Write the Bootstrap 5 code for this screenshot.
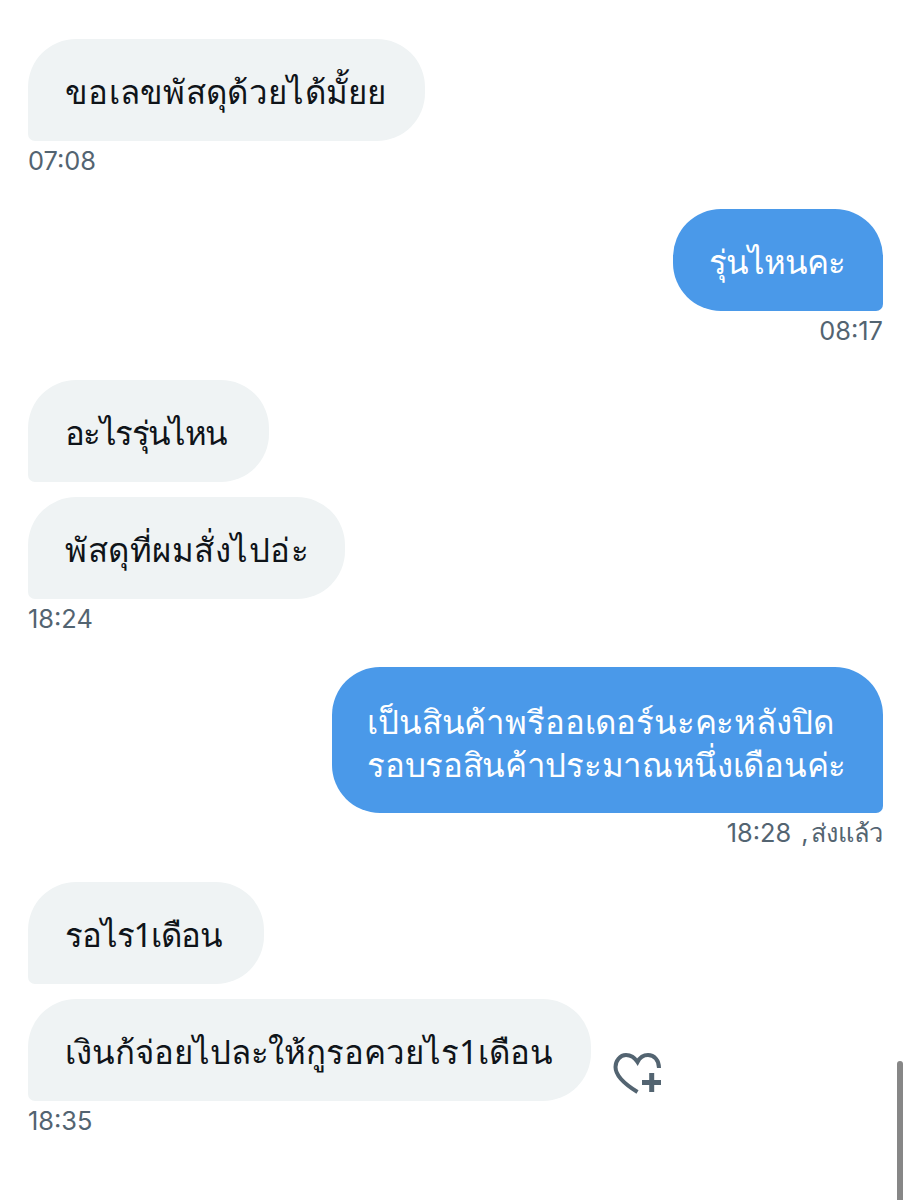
<!DOCTYPE html>
<html lang="th">
<head>
  <meta charset="UTF-8" />
  <title>Messages</title>
  <link href="https://cdn.jsdelivr.net/npm/bootstrap@5.3.3/dist/css/bootstrap.min.css" rel="stylesheet" />
  <style>
    html, body { height: 1200px; overflow: hidden; }
    body { background: #fff; font-family: "Noto Sans", "DejaVu Sans", sans-serif; position: relative; }
    .thread { padding: 39px 27px 0 28px; }
    .bubble { font-size: 33px; line-height: 44px; padding: 31px 38px 27px 37px; border-radius: 48px; width: fit-content; white-space: nowrap; }
    .bubble-in { background: #eff3f4; color: #0f1419; border-bottom-left-radius: 7px; }
    .bubble-out { background: #4a99e9; color: #fff; border-bottom-right-radius: 7px; }
    .bubble-wrapped { line-height: 43px; padding: 33px 37px 27px 35px; }
    .stamp { font-family: Inter, "Noto Sans", sans-serif; font-size: 25.4px; line-height: 30px; color: #536471; margin-top: 5px; }
    .stamp-comma { margin-left: 3px; }
    .stamp-sent { word-spacing: -4px; letter-spacing: -.3px; }
    .msg-gap { height: 33px; }
    .msg-gap-wide { height: 34px; }
    .pair-gap { height: 15px; }
    .track-1 { letter-spacing: .3px; }
    .track-2 { letter-spacing: -1px; padding-left: 36px; }
    .track-3 { letter-spacing: -1.6px; padding-right: 42px; }
    .track-4 { letter-spacing: .5px; padding-right: 36px; }
    .track-5a { letter-spacing: -.15px; }
    .track-5b { letter-spacing: -.3px; }
    .track-6 { letter-spacing: -1.1px; padding-right: 42px; }
    .track-7 { letter-spacing: -.05px; }
    .like-icon { width: 50px; height: 44px; margin-left: 22px; margin-top: 53px; }
    .scroll-thumb { position: absolute; right: 7px; top: 1061px; width: 6px; height: 139px; background: #878787; border-radius: 3px 3px 0 0; }
  </style>
</head>
<body>
  <div class="thread d-flex flex-column">
    <div class="bubble bubble-in track-1">ขอเลขพัสดุด้วยได้มั้ยย</div>
    <div class="stamp">07:08</div>
    <div class="msg-gap"></div>
    <div class="bubble bubble-out align-self-end track-2">รุ่นไหนคะ</div>
    <div class="stamp align-self-end">08:17</div>
    <div class="msg-gap-wide"></div>
    <div class="bubble bubble-in track-3">อะไรรุ่นไหน</div>
    <div class="pair-gap"></div>
    <div class="bubble bubble-in track-4">พัสดุที่ผมสั่งไปอ่ะ</div>
    <div class="stamp">18:24</div>
    <div class="msg-gap"></div>
    <div class="bubble bubble-out bubble-wrapped align-self-end"><span class="track-5a">เป็นสินค้าพรีออเดอร์นะคะหลังปิด</span><br><span class="track-5b">รอบรอสินค้าประมาณหนึ่งเดือนค่ะ</span></div>
    <div class="stamp align-self-end">18:28 <span class="stamp-comma">,</span><span class="stamp-sent"> ส่งแล้ว</span></div>
    <div class="msg-gap-wide"></div>
    <div class="bubble bubble-in track-6">รอไร1เดือน</div>
    <div class="pair-gap"></div>
    <div class="d-flex align-items-start">
      <div class="bubble bubble-in track-7">เงินก้จ่อยไปละให้กูรอควยไร1เดือน</div>
      <svg class="like-icon" viewBox="0 0 50 44" fill="none" stroke="#536471" aria-hidden="true">
        <path stroke-width="4" d="M46 16C46 8 41 3 35 3 30 3 26.5 6 24.5 10 22 6 18 3 13 3 7 3 2.5 9 2.5 15 2.5 24 13 33 24.5 40"/>
        <path stroke-width="5" d="M29 30.5H48M38.7 21V40"/>
      </svg>
    </div>
    <div class="stamp">18:35</div>
  </div>
  <div class="scroll-thumb"></div>
  <script src="https://cdn.jsdelivr.net/npm/bootstrap@5.3.3/dist/js/bootstrap.bundle.min.js"></script>
</body>
</html>
